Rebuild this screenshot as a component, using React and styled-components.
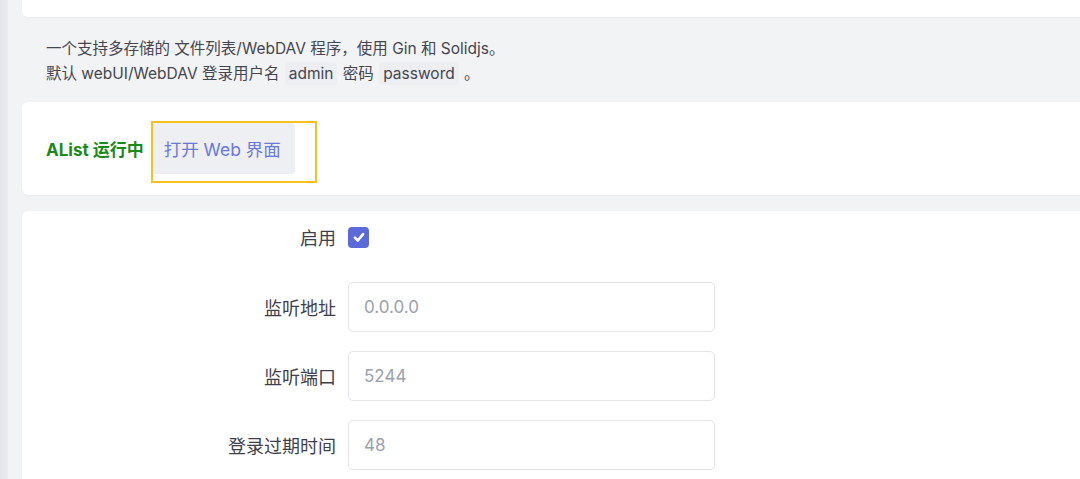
import React from 'react';
import styled, { createGlobalStyle } from 'styled-components';

const GlobalStyle = createGlobalStyle`
  body {
    margin: 0;
    background: #f2f3f5;
    font-family: Inter, "Noto Sans CJK SC", "Noto Sans", sans-serif;
    color: #3f3f4b;
  }
`;

const Page = styled.div`
  display: flex;
  width: 1080px;
  height: 479px;
  overflow: hidden;
`;

const SideStrip = styled.div`
  width: 8px;
  flex-shrink: 0;
  background: linear-gradient(to right, #e4e5e8, #ebecef);
`;

const Main = styled.div`
  flex: 1;
  padding-left: 14px;
  display: flex;
  flex-direction: column;
  background: #f2f3f5;
`;

const Card = styled.div`
  background: #ffffff;
  border-radius: 6px 0 0 6px;
  box-shadow: 0 1px 2px rgba(0, 0, 0, 0.03);
`;

const TopCard = styled(Card)`
  height: 17px;
  flex-shrink: 0;
  border-radius: 0 0 0 6px;
`;

const Description = styled.div`
  padding: 19px 0 16px 24px;
  font-size: 15.5px;
  line-height: 25px;
  color: #45454f;
`;

const Code = styled.code`
  font-family: Inter, "Noto Sans CJK SC", sans-serif;
  background: #eceef1;
  border-radius: 4px;
  padding: 2px 4px;
  margin: 0 1px;
  font-size: 15.5px;
`;

const StatusCard = styled(Card)`
  height: 93px;
  flex-shrink: 0;
  display: flex;
  align-items: center;
  gap: 7px;
  padding-left: 24px;
`;

const Running = styled.span`
  color: #1b8a1b;
  font-weight: 700;
  font-size: 17px;
`;

const ButtonWrap = styled.div`
  position: relative;
`;

const OpenButton = styled.button`
  height: 51px;
  width: 144px;
  padding: 0 0 0 13px;
  text-align: left;
  border: none;
  border-radius: 4px;
  background: #eeeff2;
  color: #6a78d9;
  font-family: Inter, "Noto Sans CJK SC", sans-serif;
  font-size: 17.5px;
  cursor: pointer;
  display: block;
`;

const Highlight = styled.div`
  position: absolute;
  left: 0;
  top: -2px;
  width: 166px;
  height: 62px;
  border: 2px solid #f6c21c;
  box-sizing: border-box;
  pointer-events: none;
`;

const FormCard = styled(Card)`
  margin-top: 16px;
  flex: 1;
  padding-top: 16px;
  border-radius: 6px 0 0 0;
`;

const Row = styled.div`
  display: flex;
  align-items: center;
  gap: 12px;
  height: ${p => p.$h}px;
  margin-bottom: ${p => p.$mb}px;
`;

const Label = styled.label`
  width: 314px;
  text-align: right;
  font-size: 18px;
  color: #3f3f4b;
`;

const Check = styled.span`
  width: 21px;
  height: 21px;
  border-radius: 4px;
  background: #5b69d9;
  display: flex;
  align-items: center;
  justify-content: center;
`;

const Input = styled.input`
  width: 367px;
  height: 50px;
  box-sizing: border-box;
  border: 1px solid #e3e5e9;
  border-radius: 5px;
  padding: 0 15px;
  font-family: Inter, "Noto Sans CJK SC", sans-serif;
  font-size: 17px;
  color: #3f3f4b;
  background: #fff;
  &::placeholder {
    color: #9ba1ac;
  }
`;

const fields = [
  { label: '监听地址', placeholder: '0.0.0.0' },
  { label: '监听端口', placeholder: '5244' },
  { label: '登录过期时间', placeholder: '48' },
];

export default function App() {
  return (
    <Page>
      <GlobalStyle />
      <SideStrip />
      <Main>
        <TopCard />
        <Description>
          一个支持多存储的 文件列表/WebDAV 程序，使用 Gin 和 Solidjs。
          <br />
          默认 webUI/WebDAV 登录用户名 <Code>admin</Code> 密码 <Code>password</Code> 。
        </Description>
        <StatusCard>
          <Running>AList 运行中</Running>
          <ButtonWrap>
            <OpenButton>打开 Web 界面</OpenButton>
            <Highlight />
          </ButtonWrap>
        </StatusCard>
        <FormCard>
          <Row $h={20} $mb={35}>
            <Label>启用</Label>
            <Check>
              <svg width="14" height="14" viewBox="0 0 24 24" fill="none" stroke="#fff" strokeWidth="4.5" strokeLinecap="round" strokeLinejoin="round">
                <polyline points="5 13 10 18 19 7" />
              </svg>
            </Check>
          </Row>
          {fields.map(f => (
            <Row key={f.label} $h={50} $mb={19}>
              <Label>{f.label}</Label>
              <Input placeholder={f.placeholder} />
            </Row>
          ))}
        </FormCard>
      </Main>
    </Page>
  );
}
